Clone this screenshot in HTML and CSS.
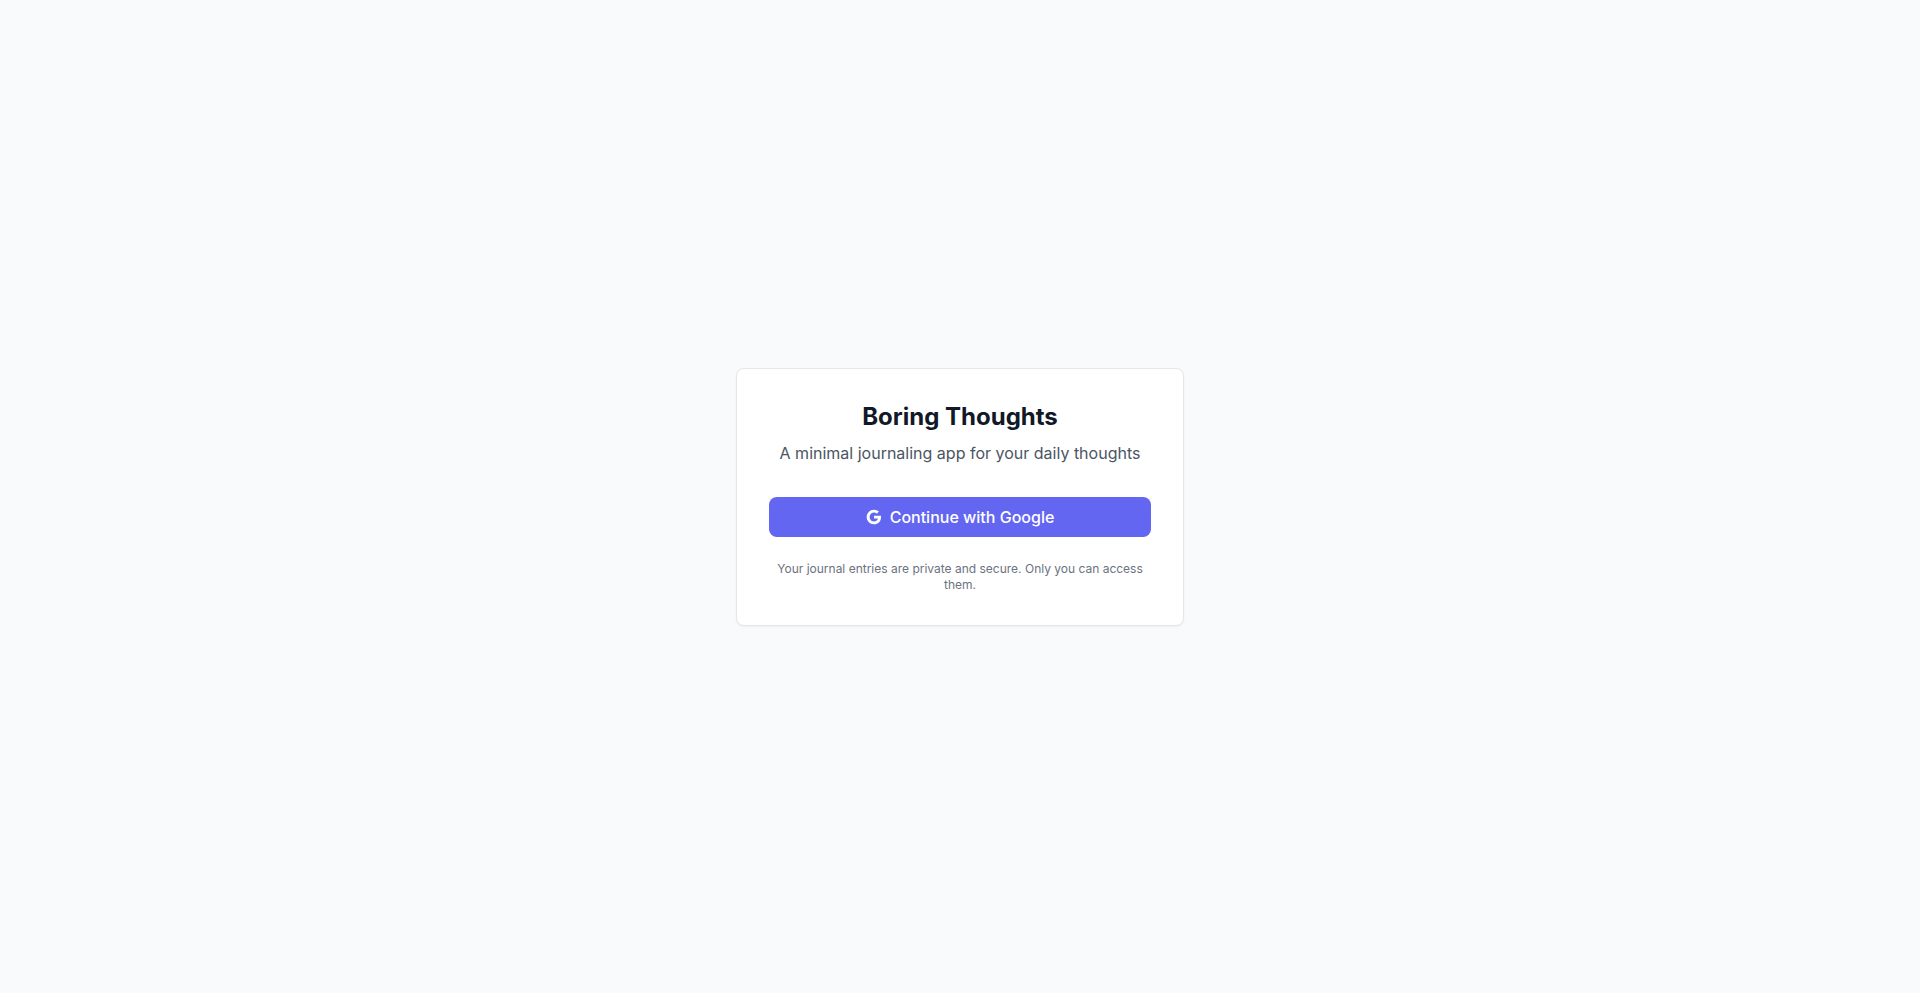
FILE: index.html
```html
<!DOCTYPE html>
<html lang="en">
<head>
<meta charset="UTF-8">
<meta name="viewport" content="width=device-width, initial-scale=1.0">
<title>Boring Thoughts</title>
<link rel="stylesheet" href="styles.css">
</head>
<body>

<main class="login-page">
    <div class="card">
        <div class="card-header">
            <h1>Boring Thoughts</h1>
            <p>A minimal journaling app for your daily thoughts</p>
        </div>
        <button type="button" class="google-button">
            <svg class="google-icon" viewBox="0 0 24 24" fill="currentColor" aria-hidden="true">
                <path d="M22.56 12.25c0-.78-.07-1.53-.2-2.25H12v4.26h5.92c-.26 1.37-1.04 2.53-2.21 3.31v2.77h3.57c2.08-1.92 3.28-4.74 3.28-8.09z"/>
                <path d="M12 23c2.97 0 5.46-.98 7.28-2.66l-3.57-2.77c-.98.66-2.23 1.06-3.71 1.06-2.86 0-5.29-1.93-6.16-4.53H2.18v2.84C3.99 20.53 7.7 23 12 23z"/>
                <path d="M5.84 14.09c-.22-.66-.35-1.36-.35-2.09s.13-1.43.35-2.09V7.07H2.18C1.43 8.55 1 10.22 1 12s.43 3.45 1.18 4.93l2.85-2.22.81-.62z"/>
                <path d="M12 5.38c1.62 0 3.06.56 4.21 1.64l3.15-3.15C17.45 2.09 14.97 1 12 1 7.7 1 3.99 3.47 2.18 7.07l3.66 2.84c.87-2.6 3.3-4.53 6.16-4.53z"/>
            </svg>
            Continue with Google
        </button>
        <p class="note">Your journal entries are private and secure. Only you can access them.</p>
    </div>
</main>

</body>
</html>
```
FILE: styles.css
```css
* {
    box-sizing: border-box;
}

body {
    margin: 0;
    font-family: Inter, sans-serif;
    font-size: 16px;
    line-height: 24px;
    color: #111827;
    background-color: #f9fafb;
}

h1, p {
    margin: 0;
}

.login-page {
    display: flex;
    align-items: center;
    justify-content: center;
    min-height: 100vh;
    padding: 16px;
}

.card {
    width: 100%;
    max-width: 448px;
    padding: 32px;
    text-align: center;
    background-color: #ffffff;
    border: 1px solid #e5e7eb;
    border-radius: 8px;
    box-shadow: 0 1px 2px rgba(0, 0, 0, 0.05);
}

.card-header {
    margin-bottom: 32px;
}

.card-header h1 {
    margin-bottom: 8px;
    font-size: 24px;
    line-height: 32px;
    font-weight: 700;
}

.card-header p {
    color: #4b5563;
}

.google-button {
    display: flex;
    align-items: center;
    justify-content: center;
    gap: 8px;
    width: 100%;
    padding: 8px 16px;
    font-family: inherit;
    font-size: 16px;
    line-height: 24px;
    font-weight: 500;
    color: #ffffff;
    background-color: #6366f1;
    border: none;
    border-radius: 8px;
    cursor: pointer;
}

.google-button:hover {
    background-color: #4f46e5;
}

.google-icon {
    width: 16px;
    height: 16px;
}

.note {
    margin-top: 24px;
    font-size: 12px;
    line-height: 16px;
    color: #6b7280;
}
```
